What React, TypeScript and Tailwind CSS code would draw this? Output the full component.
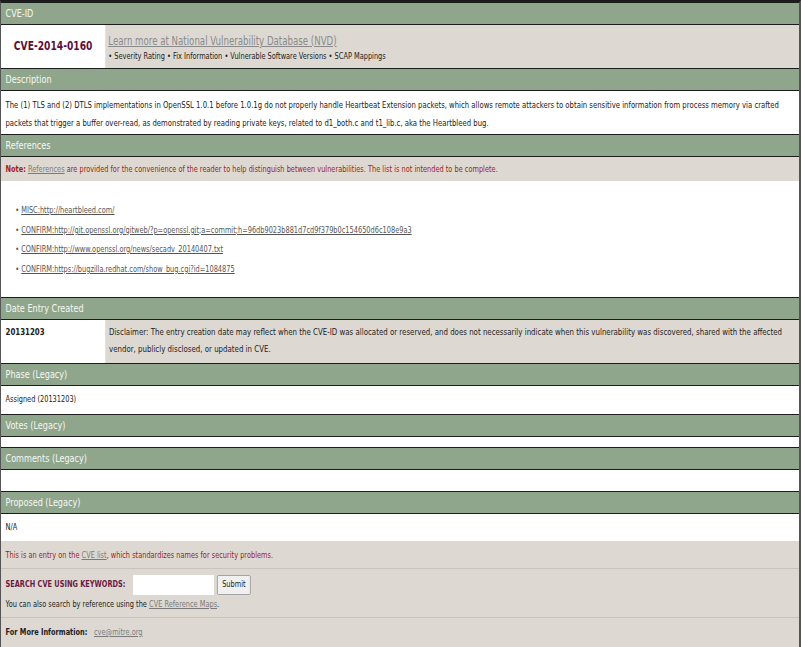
import React from "react";

const refs = [
  "MISC:http://heartbleed.com/",
  "CONFIRM:http://git.openssl.org/gitweb/?p=openssl.git;a=commit;h=96db9023b881d7cd9f379b0c154650d6c108e9a3",
  "CONFIRM:http://www.openssl.org/news/secadv_20140407.txt",
  "CONFIRM:https://bugzilla.redhat.com/show_bug.cgi?id=1084875",
];

function Header({ title }: { title: string }) {
  return (
    <div className="h-[23px] border-y border-[#1c1c1c] bg-[#90a68c] px-[6px] text-[10.8px] leading-[21px] text-[#f6f6f2]">
      {title}
    </div>
  );
}

export default function App() {
  return (
    <div className="h-[647px] w-[801px] overflow-hidden bg-white">
      <div className="w-[801px] border-t-[3px] border-b-2 border-l border-r-2 border-[#1c1c1c] border-l-[#555] border-r-[#555]">
        <div
          className="w-[1064px] origin-top-left scale-x-[0.75] text-[8.8px] text-[#222]"
          style={{ fontFamily: '"DejaVu Sans", Verdana, sans-serif' }}
        >
          {/* CVE-ID */}
          <div className="h-[22px] border-b border-[#1c1c1c] bg-[#90a68c] px-[6px] text-[10.8px] leading-[21px] text-[#f6f6f2]">
            CVE-ID
          </div>
          <div className="flex h-[43px]">
            <div className="flex w-[139px] items-center justify-center bg-white text-[12.2px] font-bold text-[#5e0d3b]">
              CVE-2014-0160
            </div>
            <div className="flex-1 bg-[#ddd9d2] px-[4px] pt-[8px]">
              <div className="text-[11.5px] leading-[16px] text-[#8a8a8a] underline">
                Learn more at National Vulnerability Database (NVD)
              </div>
              <div className="text-[8.8px] leading-[14px] text-[#222]">
                • Severity Rating • Fix Information • Vulnerable Software Versions • SCAP Mappings
              </div>
            </div>
          </div>

          <Header title="Description" />
          <div className="h-[43px] bg-white px-[6px] pt-[5px] text-[9.2px] leading-[18px]">
            The (1) TLS and (2) DTLS implementations in OpenSSL 1.0.1 before 1.0.1g do not properly handle Heartbeat Extension
            packets, which allows remote attackers to obtain sensitive information from process memory via crafted packets that
            trigger a buffer over-read, as demonstrated by reading private keys, related to d1_both.c and t1_lib.c, aka the
            Heartbleed bug.
          </div>

          <Header title="References" />
          <div className="h-[24px] bg-[#ddd9d2] px-[6px] leading-[24px] text-[#a11c1c]">
            <b>Note:</b> <span className="text-[#7a7a7a] underline">References</span> are provided for the convenience of the
            reader to help distinguish between vulnerabilities. The list is not intended to be complete.
          </div>
          <div className="h-[116px] bg-white px-[19px] pt-[20px]">
            <ul className="flex flex-col">
              {refs.map((r) => (
                <li key={r} className="h-[19.5px] leading-[19px] text-[#555]">
                  •&nbsp;<span className="underline">{r}</span>
                </li>
              ))}
            </ul>
          </div>

          <Header title="Date Entry Created" />
          <div className="flex h-[43px]">
            <div className="w-[139px] bg-white px-[6px] pt-[3px] text-[9.4px] leading-[17px] font-bold">20131203</div>
            <div className="flex-1 bg-[#ddd9d2] px-[5px] pt-[3px] text-[9.4px] leading-[17px]">
              Disclaimer: The entry creation date may reflect when the CVE-ID was allocated or reserved, and does not necessarily
              indicate when this vulnerability was discovered, shared with the affected vendor, publicly disclosed, or updated in
              CVE.
            </div>
          </div>

          <Header title="Phase (Legacy)" />
          <div className="h-[28px] bg-white px-[6px] leading-[26px]">Assigned (20131203)</div>

          <Header title="Votes (Legacy)" />
          <div className="h-[10px] bg-white" />

          <Header title="Comments (Legacy)" />
          <div className="h-[21px] bg-white" />

          <Header title="Proposed (Legacy)" />
          <div className="h-[27px] bg-white px-[6px] leading-[26px]">N/A</div>

          {/* footer */}
          <div className="bg-[#ddd9d2]">
            <div className="h-[28px] border-b border-[#c9c5be] px-[6px] leading-[28px] text-[#a11c1c]">
              This is an entry on the <span className="text-[#7a7a7a] underline">CVE list</span>, which standardizes names for
              security problems.
            </div>
            <div className="h-[49px] border-b border-[#c9c5be] px-[6px] pt-[6px]">
              <div className="flex h-[20px] items-center">
                <span className="w-[170px] font-bold text-[#6a1a45]">SEARCH CVE USING KEYWORDS:</span>
                <span className="h-[20px] w-[108px] bg-white" />
                <span className="ml-[4px] flex h-[20px] w-[45px] items-center justify-center rounded-[2px] border border-[#9a9a9a] bg-[#f0f0f0] text-[#222]">
                  Submit
                </span>
              </div>
              <div className="leading-[18px]">
                You can also search by reference using the{" "}
                <span className="text-[#7a7a7a] underline">CVE Reference Maps</span>.
              </div>
            </div>
            <div className="h-[29px] px-[6px] leading-[29px]">
              <b>For More Information:</b> <span className="ml-[6px] text-[#7a7a7a] underline">cve@mitre.org</span>
            </div>
          </div>
        </div>
      </div>
    </div>
  );
}
